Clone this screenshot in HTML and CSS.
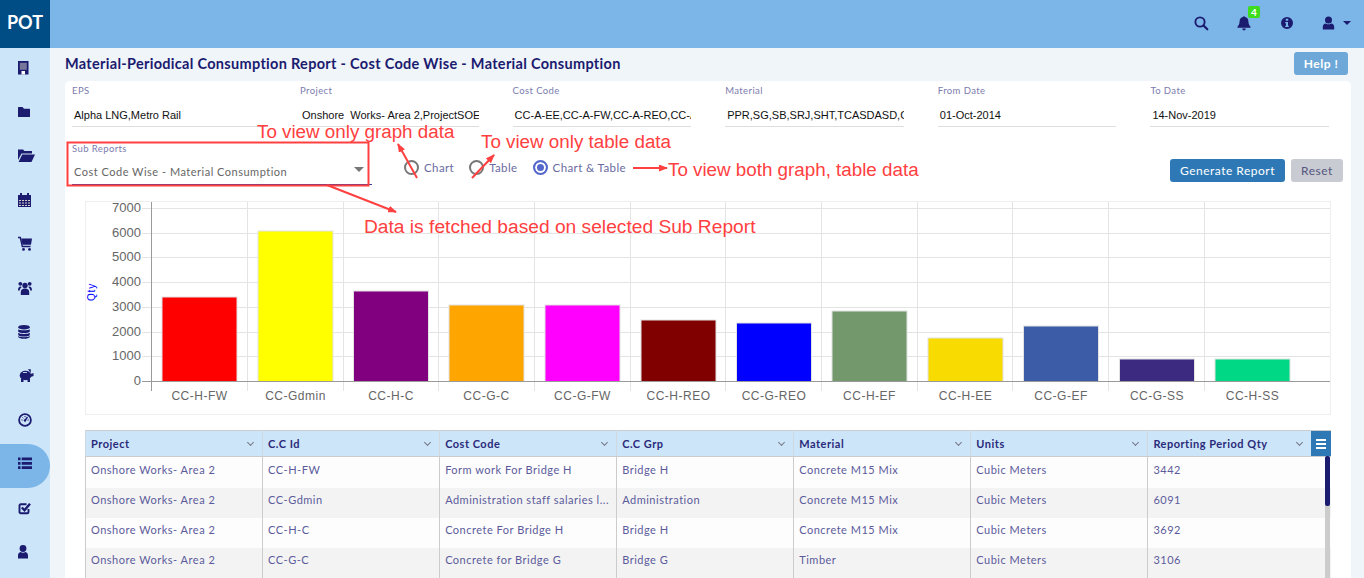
FILE: index.html
```html
<!DOCTYPE html>
<html>
<head>
	<meta name="viewport" content="width=device-width, initial-scale=1.0">
	<title>Material-Periodical Consumption Report</title>
	<link rel="stylesheet" href="styles.css">
</head>
<body>

	<div class="topbar">
		<div class="logo">POT</div>
		<div class="topIcons">
			<svg class="topIcon" viewBox="0 0 16 16"><circle cx="7" cy="7" r="4.6" fill="none" stroke="currentColor" stroke-width="1.9"/><path d="M10.5 10.5l3.8 3.8" stroke="currentColor" stroke-width="2.2" stroke-linecap="round"/></svg>
			<div class="bell">
				<svg class="topIcon" viewBox="0 0 16 16"><path d="M8 1.2c.6 0 1 .4 1 .9 2.2.4 3.4 2.1 3.4 4.3 0 3.300 1.600 4.500 2.100 5.300v1H1.500v-1c.5-.8 2.100-2 2.100-5.300C3.600 4.200 4.800 2.500 7 2.100c0-.5.4-.9 1-.9z"/><path d="M6.200 13.600h3.600c0 1-.8 1.800-1.800 1.800s-1.800-.8-1.800-1.800z"/></svg>
				<span class="badge">4</span>
			</div>
			<svg class="topIcon" viewBox="0 0 16 16"><path fill-rule="evenodd" d="M8 2a6 6 0 1 1 0 12A6 6 0 0 1 8 2zM6.800 3.800v2h2.400v-2zM6.200 7v1.300h.8v2.500h-.8v1.300h3.600v-1.300H9V7z"/></svg>
			<div class="userMenu">
				<svg class="topIcon" viewBox="0 0 16 16"><circle cx="7.500" cy="5" r="3.500"/><path d="M1.800 14.500v-2.600c0-2.200 1.300-3.500 3-3.500 1.600 1.200 3.800 1.200 5.400 0 1.700 0 3 1.300 3 3.500v2.600z"/></svg>
				<span class="caret"></span>
			</div>
		</div>
	</div>

	<div class="main">
		<div class="sidebar">
			<div class="navItem"><svg class="navIcon" viewBox="0 0 20 16"><rect x="0" y="1" width="10.500" height="13.500"/><rect x="1.800" y="2.800" width="7" height="7" fill="#77779c"/><rect x="3.500" y="11" width="3.500" height="3.500" fill="#fff"/></svg></div>
			<div class="navItem"><svg class="navIcon" viewBox="0 0 20 16"><path d="M0 3.500Q0 3 .5 3h4L6 4.800h5.500q.5 0 .5.500v7.200q0 .5-.5.5H.5q-.5 0-.5-.5z"/></svg></div>
			<div class="navItem"><svg class="navIcon" viewBox="0 0 20 16"><path d="M0 1.500h5L6.500 3H14v2.500H3.500L0 12z"/><path d="M4.200 6.500H17L13.500 14H.6z"/></svg></div>
			<div class="navItem"><svg class="navIcon" viewBox="0 0 20 16"><rect x="0" y="3" width="13" height="12"/><rect x="2" y="1" width="2" height="3"/><rect x="9" y="1" width="2" height="3"/><path d="M1 8.500h11M1 11h11M1 13.500h11" stroke="#d8cfc8" stroke-width="1.200" stroke-dasharray="2 1"/></svg></div>
			<div class="navItem"><svg class="navIcon" viewBox="0 0 20 16"><path d="M0 1.500h2.300l2 9h8.200" fill="none" stroke="currentColor" stroke-width="1.400"/><path d="M3.200 2.500H14l-1 6.200H4.500z"/><circle cx="5.500" cy="13.400" r="1.400"/><circle cx="11.500" cy="13.400" r="1.400"/></svg></div>
			<div class="navItem"><svg class="navIcon" viewBox="0 0 20 16"><circle cx="7" cy="5.500" r="2.700"/><path d="M2.800 15v-2.800c0-2.400 1.500-3.700 4.200-3.700s4.200 1.300 4.200 3.700V15z"/><circle cx="2.300" cy="3.800" r="1.900"/><circle cx="11.700" cy="3.800" r="1.900"/><path d="M0 10.500C0 7.500 1 6.500 2.500 6.500c.5 0 1 .2 1.300.6-1.300 1-2 2.200-2 3.400zM14 10.500c0-3-1-4-2.500-4-.5 0-1 .2-1.300.6 1.300 1 2 2.200 2 3.400z"/></svg></div>
			<div class="navItem"><svg class="navIcon" viewBox="0 0 20 16"><ellipse cx="6" cy="3.200" rx="5.800" ry="2.300"/><path d="M.2 5.200c1 1.500 10.600 1.500 11.600 0v2.300c-1 2-10.600 2-11.600 0zM.2 8.700c1 1.600 10.600 1.600 11.600 0V11c-1 2-10.600 2-11.600 0zM.2 12.100c1 1.600 10.600 1.600 11.600 0v.8c-1 2.400-10.600 2.400-11.600 0z"/></svg></div>
			<div class="navItem"><svg class="navIcon" viewBox="0 0 20 16"><ellipse cx="7.500" cy="7.500" rx="5.800" ry="4.700"/><path d="M10 1l3 .5-.5 3.500zM3 10.500h2.500V14H3zM9.500 10.500H12V14H9.500zM12.500 6l3-1v3l-3 1z"/><rect x="5" y="4" width="4" height=".9" fill="#cce5f9"/></svg></div>
			<div class="navItem"><svg class="navIcon" viewBox="0 0 20 16"><circle cx="7" cy="8" r="5.900" fill="none" stroke="currentColor" stroke-width="1.800"/><path d="M7 8.500l2.500-3.500" stroke="currentColor" stroke-width="1.400"/><path d="M3.500 8h1.200M9.500 8h1.200M7 4v1.200M4.500 5.500l.8.8" stroke="currentColor" stroke-width="1"/><circle cx="7" cy="8.500" r="1.200"/></svg></div>
			<div class="navItem active"><svg class="navIcon" viewBox="0 0 20 16"><path d="M0 1.500h2.500v2.800H0zM3.700 1.500H14v2.800H3.700zM0 5.900h2.500v2.800H0zM3.700 5.900H14v2.800H3.700zM0 10.300h2.500v2.800H0zM3.700 10.300H14v2.800H3.700z"/></svg></div>
			<div class="navItem"><svg class="navIcon" viewBox="0 0 20 16"><path d="M10.500 9v3c0 .8-.5 1.300-1.300 1.300H2.800c-.8 0-1.300-.5-1.300-1.300V5.500c0-.8.5-1.300 1.300-1.300h5.700" fill="none" stroke="currentColor" stroke-width="1.900"/><path d="M3.800 7.500l2.700 2.700L12 3.800" fill="none" stroke="currentColor" stroke-width="2.400"/></svg></div>
			<div class="navItem"><svg class="navIcon" viewBox="0 0 20 16"><circle cx="5" cy="4.500" r="3.400"/><path d="M0 14.500v-3c0-2 1-3.300 2.500-3.600 1.500 1.100 3.500 1.100 5 0 1.500.3 2.500 1.600 2.500 3.600v3z"/></svg></div>
		</div>

		<div class="content">
			<div class="titleRow">
				<h1 class="pageTitle">Material-Periodical Consumption Report - Cost Code Wise - Material Consumption</h1>
				<button class="helpButton">Help !</button>
			</div>

			<div class="card">
				<div class="filters">
					<div class="field">
						<div class="fieldLabel">EPS</div>
						<div class="fieldValue">Alpha LNG,Metro Rail</div>
					</div>
					<div class="field">
						<div class="fieldLabel">Project</div>
						<div class="fieldValue">Onshore&nbsp; Works- Area 2,ProjectSOE,Project</div>
					</div>
					<div class="field">
						<div class="fieldLabel">Cost Code</div>
						<div class="fieldValue">CC-A-EE,CC-A-FW,CC-A-REO,CC-A-SS</div>
					</div>
					<div class="field">
						<div class="fieldLabel">Material</div>
						<div class="fieldValue">PPR,SG,SB,SRJ,SHT,TCASDASD,Concrete</div>
					</div>
					<div class="field">
						<div class="fieldLabel">From Date</div>
						<div class="fieldValue">01-Oct-2014</div>
					</div>
					<div class="field">
						<div class="fieldLabel">To Date</div>
						<div class="fieldValue">14-Nov-2019</div>
					</div>
				</div>

				<div class="reportRow">
					<div class="subReport">
						<div class="fieldLabel">Sub Reports</div>
						<div class="subValue">Cost Code Wise - Material Consumption<span class="selectArrow"></span></div>
					</div>
					<div class="radios">
						<label class="radio"><span class="radioDot"></span>Chart</label>
						<label class="radio"><span class="radioDot"></span>Table</label>
						<label class="radio"><span class="radioDot checked"></span>Chart &amp; Table</label>
					</div>
					<div class="actions">
						<button class="generateButton">Generate Report</button>
						<button class="resetButton">Reset</button>
					</div>
				</div>

				<div class="chartBox">
					<svg class="chart" viewBox="0 0 1244 212">
						<g class="grid">
							<path d="M56 6.500H1244M56 31.500H1244M56 55.500H1244M56 80.500H1244M56 105.500H1244M56 130.500H1244M56 154.500H1244"/>
							<path d="M161.500 0V189M257.500 0V189M352.500 0V189M448.500 0V189M544.500 0V189M639.500 0V189M735.500 0V189M831.500 0V189M926.500 0V189M1022.500 0V189M1118.500 0V189"/>
						</g>
						<g class="bars">
							<rect x="76" y="95" width="75" height="84.500" fill="#ff0000"/>
							<rect x="172" y="29" width="75" height="150.500" fill="#ffff00"/>
							<rect x="267.500" y="89" width="75" height="90.500" fill="#800080"/>
							<rect x="363" y="103" width="75" height="76.500" fill="#ffa500"/>
							<rect x="459" y="103" width="75" height="76.500" fill="#ff00ff"/>
							<rect x="555" y="118" width="75" height="61.500" fill="#800000"/>
							<rect x="650.500" y="121" width="75" height="58.500" fill="#0000ff"/>
							<rect x="746" y="109" width="75" height="70.500" fill="#73986c"/>
							<rect x="842" y="136" width="75" height="43.500" fill="#f8db00"/>
							<rect x="937.500" y="124" width="75" height="55.500" fill="#3c5ca8"/>
							<rect x="1033.500" y="157" width="75" height="22.500" fill="#3b2a80"/>
							<rect x="1129" y="157" width="75" height="22.500" fill="#00d885"/>
						</g>
						<path class="axis" d="M65.500 0V189M56 179.500H1244"/>
						<g class="yLabels">
							<text x="55" y="9.500">7000</text>
							<text x="55" y="34.500">6000</text>
							<text x="55" y="58.500">5000</text>
							<text x="55" y="83.500">4000</text>
							<text x="55" y="108.500">3000</text>
							<text x="55" y="133.500">2000</text>
							<text x="55" y="157.500">1000</text>
							<text x="55" y="182.500">0</text>
						</g>
						<g class="xLabels">
							<text x="113.500" y="198">CC-H-FW</text>
							<text x="209.500" y="198">CC-Gdmin</text>
							<text x="305" y="198">CC-H-C</text>
							<text x="400.500" y="198">CC-G-C</text>
							<text x="496.500" y="198">CC-G-FW</text>
							<text x="592.500" y="198">CC-H-REO</text>
							<text x="688" y="198">CC-G-REO</text>
							<text x="783.500" y="198">CC-H-EF</text>
							<text x="879.500" y="198">CC-H-EE</text>
							<text x="975" y="198">CC-G-EF</text>
							<text x="1071" y="198">CC-G-SS</text>
							<text x="1166.500" y="198">CC-H-SS</text>
						</g>
						<text class="yTitle" transform="translate(9 90) rotate(-90)">Qty</text>
					</svg>
				</div>

				<div class="tableBox">
					<table class="reportTable">
						<thead>
							<tr>
								<th><div class="thInner">Project<span class="chevron"></span></div></th>
								<th><div class="thInner">C.C Id<span class="chevron"></span></div></th>
								<th><div class="thInner">Cost Code<span class="chevron"></span></div></th>
								<th><div class="thInner">C.C Grp<span class="chevron"></span></div></th>
								<th><div class="thInner">Material<span class="chevron"></span></div></th>
								<th><div class="thInner">Units<span class="chevron"></span></div></th>
								<th><div class="thInner">Reporting Period Qty<span class="chevron"></span></div></th>
								<th class="menuCell"><span class="menuBars"></span></th>
							</tr>
						</thead>
						<tbody>
							<tr>
								<td>Onshore Works- Area 2</td><td>CC-H-FW</td><td>Form work For Bridge H</td><td>Bridge H</td><td>Concrete M15 Mix</td><td>Cubic Meters</td><td colspan="2">3442</td>
							</tr>
							<tr>
								<td>Onshore Works- Area 2</td><td>CC-Gdmin</td><td>Administration staff salaries l...</td><td>Administration</td><td>Concrete M15 Mix</td><td>Cubic Meters</td><td colspan="2">6091</td>
							</tr>
							<tr>
								<td>Onshore Works- Area 2</td><td>CC-H-C</td><td>Concrete For Bridge H</td><td>Bridge H</td><td>Concrete M15 Mix</td><td>Cubic Meters</td><td colspan="2">3692</td>
							</tr>
							<tr>
								<td>Onshore Works- Area 2</td><td>CC-G-C</td><td>Concrete for Bridge G</td><td>Bridge G</td><td>Timber</td><td>Cubic Meters</td><td colspan="2">3106</td>
							</tr>
						</tbody>
					</table>
					<div class="scrollTrack"><div class="scrollThumb"></div></div>
				</div>
			</div>
		</div>
	</div>

	<!-- red notes drawn over the screen -->
	<svg class="notes" viewBox="0 0 1364 578">
		<defs>
			<marker id="head" markerWidth="9" markerHeight="7" refX="8" refY="3.500" orient="auto" markerUnits="userSpaceOnUse"><path d="M0 0L9 3.500L0 7z" fill="#ff4040"/></marker>
		</defs>
		<rect x="67.500" y="142.500" width="301" height="43" fill="none" stroke="#ff4040" stroke-width="2"/>
		<path class="noteLine" d="M417 178L398 144" marker-end="url(#head)"/>
		<path class="noteLine" d="M472 178L494 155" marker-end="url(#head)"/>
		<path class="noteLine" d="M633 168H667" marker-end="url(#head)"/>
		<path class="noteLine" d="M327 185L396 212" marker-end="url(#head)"/>
		<text class="note" x="257" y="138">To view only graph data</text>
		<text class="note" x="481" y="148">To view only table data</text>
		<text class="note" x="668" y="176">To view both graph, table data</text>
		<text class="note noteWide" x="364" y="233">Data is fetched based on selected Sub Report</text>
	</svg>

</body>
</html>
```
FILE: styles.css
```css
html, body {
	margin: 0;
	height: 100%;
	overflow: hidden;
}

body {
	position: relative;
	font-family: "Lato", "Liberation Sans", sans-serif;
	background-color: #f0f5f9;
	color: #1b1b6f;
}

/* top bar */
.topbar {
	display: flex;
	justify-content: space-between;
	height: 48px;
	background-color: #7cb6e8;
}

.logo {
	width: 50px;
	background-color: #004c85;
	color: #fff;
	font-size: 18px;
	font-weight: 700;
	line-height: 44px;
	text-align: center;
}

.topIcons {
	display: flex;
	align-items: center;
	gap: 27px;
	padding-right: 13px;
	padding-bottom: 2px;
}

.topIcon {
	display: block;
	width: 16px;
	height: 16px;
	fill: currentColor;
}

.bell {
	position: relative;
}

.badge {
	position: absolute;
	left: 12px;
	top: -9px;
	width: 12px;
	height: 12px;
	border-radius: 2px;
	background-color: #3ddc1c;
	color: #fff;
	font-size: 10px;
	font-weight: 700;
	line-height: 12px;
	text-align: center;
}

.userMenu {
	display: flex;
	align-items: center;
	gap: 6px;
	margin-left: -1px;
}

.caret {
	border-left: 4px solid transparent;
	border-right: 4px solid transparent;
	border-top: 4px solid #1b1b6f;
}

.main {
	display: flex;
	height: 530px;
}

/* left nav */
.sidebar {
	flex: 0 0 50px;
	background-color: #cce5f9;
}

.navItem {
	height: 40px;
	padding: 0 0 4px 18px;
	display: flex;
	align-items: center;
}

.navItem.active {
	background-color: #7cb6e8;
	border-radius: 0 22px 22px 0;
}

.navIcon {
	width: 20px;
	height: 16px;
	fill: currentColor;
}

/* content */
.content {
	flex: 1;
	padding: 0 13px 0 15px;
	min-width: 0;
}

.titleRow {
	display: flex;
	justify-content: space-between;
	align-items: flex-start;
	height: 33px;
	padding-top: 4px;
	box-sizing: border-box;
}

.pageTitle {
	margin: 0;
	font-size: 14.5px;
	font-weight: 700;
	line-height: 16px;
	margin-top: 4px;
	letter-spacing: .3px;
}

.helpButton {
	width: 54px;
	height: 23px;
	margin-right: 3px;
	border: 0;
	border-radius: 3px;
	background-color: #6ea8d8;
	color: #fff;
	font-family: "Lato", sans-serif;
	font-size: 12px;
	font-weight: 700;
	letter-spacing: .5px;
}

.card {
	background-color: #fff;
	border-radius: 5px 5px 0 0;
	height: 520px;
	padding-top: 4px;
	box-sizing: border-box;
}

.filters {
	display: grid;
	grid-template-columns: 228px repeat(5, 212.600px);
	padding-left: 7px;
}

.field {
	width: 178.500px;
}

.field:first-child {
	width: 194px;
}

.fieldLabel {
	color: #7c7cae;
	font-size: 9.500px;
	line-height: 12px;
	letter-spacing: .4px;
}

.fieldValue {
	height: 30px;
	padding: 0 2px;
	border-bottom: 1px solid #dedede;
	overflow: hidden;
	white-space: nowrap;
	color: #111;
	font-family: "Liberation Sans", sans-serif;
	font-size: 11px;
	line-height: 36px;
	box-sizing: border-box;
}

.reportRow {
	display: flex;
	align-items: flex-start;
	height: 59px;
	padding: 15px 8px 0 7px;
	box-sizing: border-box;
}

.subReport {
	position: relative;
	width: 300px;
	height: 43px;
	padding-top: 1px;
	border-bottom: 1px solid #3c3c9c;
	box-sizing: border-box;
}

.subValue {
	padding-left: 2px;
	color: #666;
	font-size: 11px;
	line-height: 34px;
	letter-spacing: .5px;
}

.selectArrow {
	position: absolute;
	right: 8px;
	top: 25px;
	border-left: 5px solid transparent;
	border-right: 5px solid transparent;
	border-top: 5px solid #777;
}

.radios {
	display: flex;
	gap: 15px;
	margin-left: 32px;
	margin-top: 18px;
}

.radio {
	display: flex;
	align-items: center;
	gap: 5px;
	color: #6a6aa0;
	font-size: 11.500px;
	letter-spacing: .4px;
}

.radioDot {
	width: 11px;
	height: 11px;
	border: 2px solid #777;
	border-radius: 50%;
	background-color: #fff;
}

.radioDot.checked {
	border-color: #5566cc;
	background-color: #5566cc;
	box-shadow: inset 0 0 0 2px #fff;
}

.actions {
	display: flex;
	gap: 6px;
	margin-left: auto;
	margin-top: 17px;
}

.generateButton, .resetButton {
	height: 23px;
	border: 0;
	border-radius: 3px;
	font-family: "Lato", sans-serif;
	font-size: 12px;
	letter-spacing: .5px;
}

.generateButton {
	width: 115px;
	background-color: #2e79b5;
	color: #fff;
}

.resetButton {
	width: 52px;
	background-color: #c8ccd2;
	color: #55557f;
}

/* chart */
.chartBox {
	margin: 15px 20px 0;
	height: 214px;
	border: 1px solid #eee;
	box-sizing: border-box;
}

.chart {
	display: block;
	width: 1244px;
	height: 212px;
}

.grid path {
	fill: none;
	stroke: #e4e4e4;
	stroke-width: 1;
}

.bars rect {
	stroke: #e2e2e2;
	stroke-width: 1;
}

.axis {
	fill: none;
	stroke: #9a9a9a;
	stroke-width: 1;
}

.chart text {
	font-family: "Liberation Sans", sans-serif;
	fill: #666;
}

.yLabels text {
	font-size: 13px;
	text-anchor: end;
}

.xLabels text {
	font-size: 12px;
	letter-spacing: .5px;
	text-anchor: middle;
}

.chart .yTitle {
	fill: #0000ff;
	font-size: 10px;
	letter-spacing: .8px;
	text-anchor: middle;
}

/* table */
.tableBox {
	position: relative;
	margin: 15px 20px 0;
}

.reportTable {
	width: 1246px;
	table-layout: fixed;
	border-collapse: collapse;
	border-left: 1px solid #ccc;
	border-top: 1px solid #ccc;
	font-size: 11px;
	letter-spacing: .5px;
}

.reportTable th {
	width: 177px;
	height: 26px;
	padding: 0 5px;
	background-color: #cce5f9;
	border-left: 1px solid #cfd8df;
	border-bottom: 1px solid #ccc;
	box-sizing: border-box;
	color: #2a2a7a;
	font-weight: 700;
	text-align: left;
}

.reportTable th:nth-child(7) {
	width: 163px;
}

.reportTable .menuCell {
	width: 20px;
	padding: 0;
	background-color: #2e79b5;
	border-left: 0;
}

.thInner {
	display: flex;
	justify-content: space-between;
	align-items: center;
}

.chevron {
	width: 4px;
	height: 4px;
	margin: 0 4px 3px 0;
	border-right: 1px solid #778;
	border-bottom: 1px solid #778;
	transform: rotate(45deg);
}

.menuBars {
	display: block;
	width: 10px;
	height: 2px;
	margin: 0 auto;
	background-color: #fff;
	box-shadow: 0 -4px 0 #fff, 0 4px 0 #fff;
}

.reportTable td {
	height: 30px;
	padding: 5px 5px 0;
	border-left: 1px solid #ccc;
	box-sizing: border-box;
	color: #5b5b9b;
	line-height: 14px;
	vertical-align: top;
	white-space: nowrap;
	overflow: hidden;
}

.reportTable tbody tr:first-child td {
	height: 31px;
	padding-top: 6px;
}

.reportTable tbody tr:nth-child(odd) {
	background-color: #fdfdfd;
}

.reportTable tbody tr:nth-child(even) {
	background-color: #f3f3f3;
}

.scrollTrack {
	position: absolute;
	right: 1px;
	top: 26px;
	bottom: 0;
	width: 5px;
	background-color: #ccc;
}

.scrollThumb {
	height: 50px;
	border-radius: 2px;
	background-color: #1b1b6f;
}

/* red notes */
.notes {
	position: absolute;
	left: 0;
	top: 0;
	width: 1364px;
	height: 578px;
	pointer-events: none;
}

.noteLine {
	fill: none;
	stroke: #ff4040;
	stroke-width: 2;
}

.note {
	fill: #ff4040;
	font-family: "Liberation Sans", sans-serif;
	font-size: 18.800px;
}

.noteWide {
	font-size: 19.200px;
}
```
